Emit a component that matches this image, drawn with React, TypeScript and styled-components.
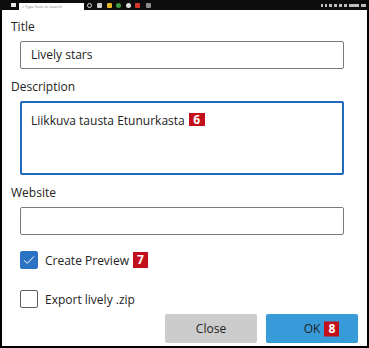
import React from 'react';
import styled, { createGlobalStyle } from 'styled-components';

const GlobalStyle = createGlobalStyle`
    html, body {
        margin: 0;
        padding: 0;
        background: #ffffff;
    }
    body {
        font-family: "Open Sans", "Noto Sans", sans-serif;
        color: #222222;
    }
`;

const Screen = styled.div`
    width: 369px;
    height: 348px;
    display: flex;
    flex-direction: column;
    overflow: hidden;
    background: #ffffff;
`;

const Taskbar = styled.div`
    height: 10px;
    flex-shrink: 0;
    background: #0c0c0c;
    display: flex;
    align-items: center;
    padding: 0 3px 0 11px;
`;

const StartLogo = styled.span`
    width: 5px;
    height: 4px;
    background: #e8e8e8;
    margin-right: 3px;
`;

const SearchBox = styled.div`
    align-self: flex-end;
    width: 65px;
    height: 7px;
    background: #ffffff;
    display: flex;
    align-items: center;
    padding-left: 3px;
    box-sizing: border-box;
    font-size: 4px;
    line-height: 4px;
    color: #777;
    white-space: nowrap;
    overflow: hidden;
`;

const TaskIcon = styled.span<{ $color: string; $round?: boolean; $ring?: boolean; $gap?: number }>`
    box-sizing: border-box;
    width: 5px;
    height: 5px;
    margin-left: ${({ $gap }) => $gap ?? 4}px;
    background: ${({ $color, $ring }) => ($ring ? 'transparent' : $color)};
    border: ${({ $color, $ring }) => ($ring ? `1px solid ${$color}` : 'none')};
    border-radius: ${({ $round }) => ($round ? '50%' : '1px')};
`;

const Tray = styled.div`
    margin-left: auto;
    display: flex;
    align-items: center;
    gap: 2px;
`;

const TrayDot = styled.span<{ $w?: number }>`
    width: ${({ $w }) => $w ?? 3}px;
    height: 3px;
    background: #bdbdbd;
`;

const Window = styled.div`
    flex: 1;
    display: flex;
    flex-direction: column;
    border-left: 2px solid #000000;
    border-right: 2px solid #000000;
    border-bottom: 2px solid #000000;
    padding: 9px 0 0 9px;
`;

const Label = styled.div`
    font-size: 12px;
    line-height: 16px;
    height: 16px;
    margin-bottom: 6px;
`;

const TextInput = styled.div`
    box-sizing: border-box;
    margin-left: 9px;
    width: 324px;
    height: 28px;
    border: 1px solid #7a7a7a;
    border-radius: 2px;
    padding-left: 10px;
    font-size: 12px;
    line-height: 26px;
    margin-bottom: 10px;
`;

const TextArea = styled.div`
    box-sizing: border-box;
    margin-left: 9px;
    width: 324px;
    height: 74px;
    border: 2px solid #1f6abf;
    border-radius: 2px;
    padding: 10px 9px;
    font-size: 12px;
    line-height: 16px;
    margin-bottom: 10px;
    display: flex;
    align-items: flex-start;
`;

const Badge = styled.span<{ $w: number; $h: number }>`
    display: inline-flex;
    align-items: center;
    justify-content: center;
    width: ${({ $w }) => $w}px;
    height: ${({ $h }) => $h}px;
    background: #c3111b;
    color: #ffffff;
    font-weight: 700;
    font-size: 12px;
    line-height: 1;
    margin-left: 4px;
    flex-shrink: 0;
`;

const CheckRow = styled.div<{ $top: number }>`
    display: flex;
    align-items: center;
    margin-left: 9px;
    margin-top: ${({ $top }) => $top}px;
    height: 18px;
    font-size: 12px;
`;

const Box = styled.span<{ $checked?: boolean }>`
    box-sizing: border-box;
    width: 18px;
    height: 18px;
    border-radius: 2px;
    margin-right: 7px;
    display: flex;
    align-items: center;
    justify-content: center;
    background: ${({ $checked }) => ($checked ? '#2a73c3' : '#ffffff')};
    border: 1px solid ${({ $checked }) => ($checked ? '#2a73c3' : '#5f5f5f')};
`;

const ButtonBar = styled.div`
    display: flex;
    justify-content: flex-end;
    gap: 9px;
    padding-right: 9px;
    margin-top: 6px;
`;

const Button = styled.div<{ $primary?: boolean }>`
    width: 92px;
    height: 29px;
    border-radius: 2px;
    display: flex;
    align-items: center;
    justify-content: center;
    font-size: 12px;
    background: ${({ $primary }) => ($primary ? '#379ad9' : '#cccccc')};
    color: #222222;
`;

const ButtonText = styled.span`
    position: relative;
`;

const FloatingBadge = styled(Badge)`
    position: absolute;
    left: 100%;
    top: 50%;
    transform: translateY(-50%);
`;

const App: React.FC = () => {
    return (
        <Screen>
            <GlobalStyle />
            <Taskbar>
                <StartLogo />
                <SearchBox>⌕ Type here to search</SearchBox>
                <TaskIcon $color="#dddddd" $gap={3} $round $ring />
                <TaskIcon $color="#cfcfcf" $gap={5} />
                <TaskIcon $color="#e6b422" $gap={5} />
                <TaskIcon $color="#3e9b45" $gap={4} $round />
                <TaskIcon $color="#e0e0e0" $gap={5} $round />
                <TaskIcon $color="#d8362b" $gap={4} />
                <TaskIcon $color="#8a8a8a" $gap={6} />
                <Tray>
                    <TrayDot $w={2} />
                    <TrayDot $w={2} />
                    <TrayDot />
                    <TrayDot />
                    <TrayDot />
                    <TrayDot />
                    <TrayDot $w={10} />
                    <TrayDot $w={5} />
                </Tray>
            </Taskbar>
            <Window>
                <Label>Title</Label>
                <TextInput>Lively stars</TextInput>
                <Label>Description</Label>
                <TextArea>
                    Liikkuva tausta Etunurkasta
                    <Badge $w={16} $h={13}>6</Badge>
                </TextArea>
                <Label>Website</Label>
                <TextInput />
                <CheckRow $top={6}>
                    <Box $checked>
                        <svg width="12" height="10" viewBox="0 0 12 10">
                            <path d="M1 5.2 L4.2 8.4 L11 1.4" fill="none" stroke="#ffffff" strokeWidth="1" />
                        </svg>
                    </Box>
                    Create Preview
                    <Badge $w={15} $h={16}>7</Badge>
                </CheckRow>
                <CheckRow $top={21}>
                    <Box />
                    Export lively .zip
                </CheckRow>
                <ButtonBar>
                    <Button>Close</Button>
                    <Button $primary>
                        <ButtonText>
                            OK
                            <FloatingBadge $w={15} $h={15}>8</FloatingBadge>
                        </ButtonText>
                    </Button>
                </ButtonBar>
            </Window>
        </Screen>
    );
};

export default App;
